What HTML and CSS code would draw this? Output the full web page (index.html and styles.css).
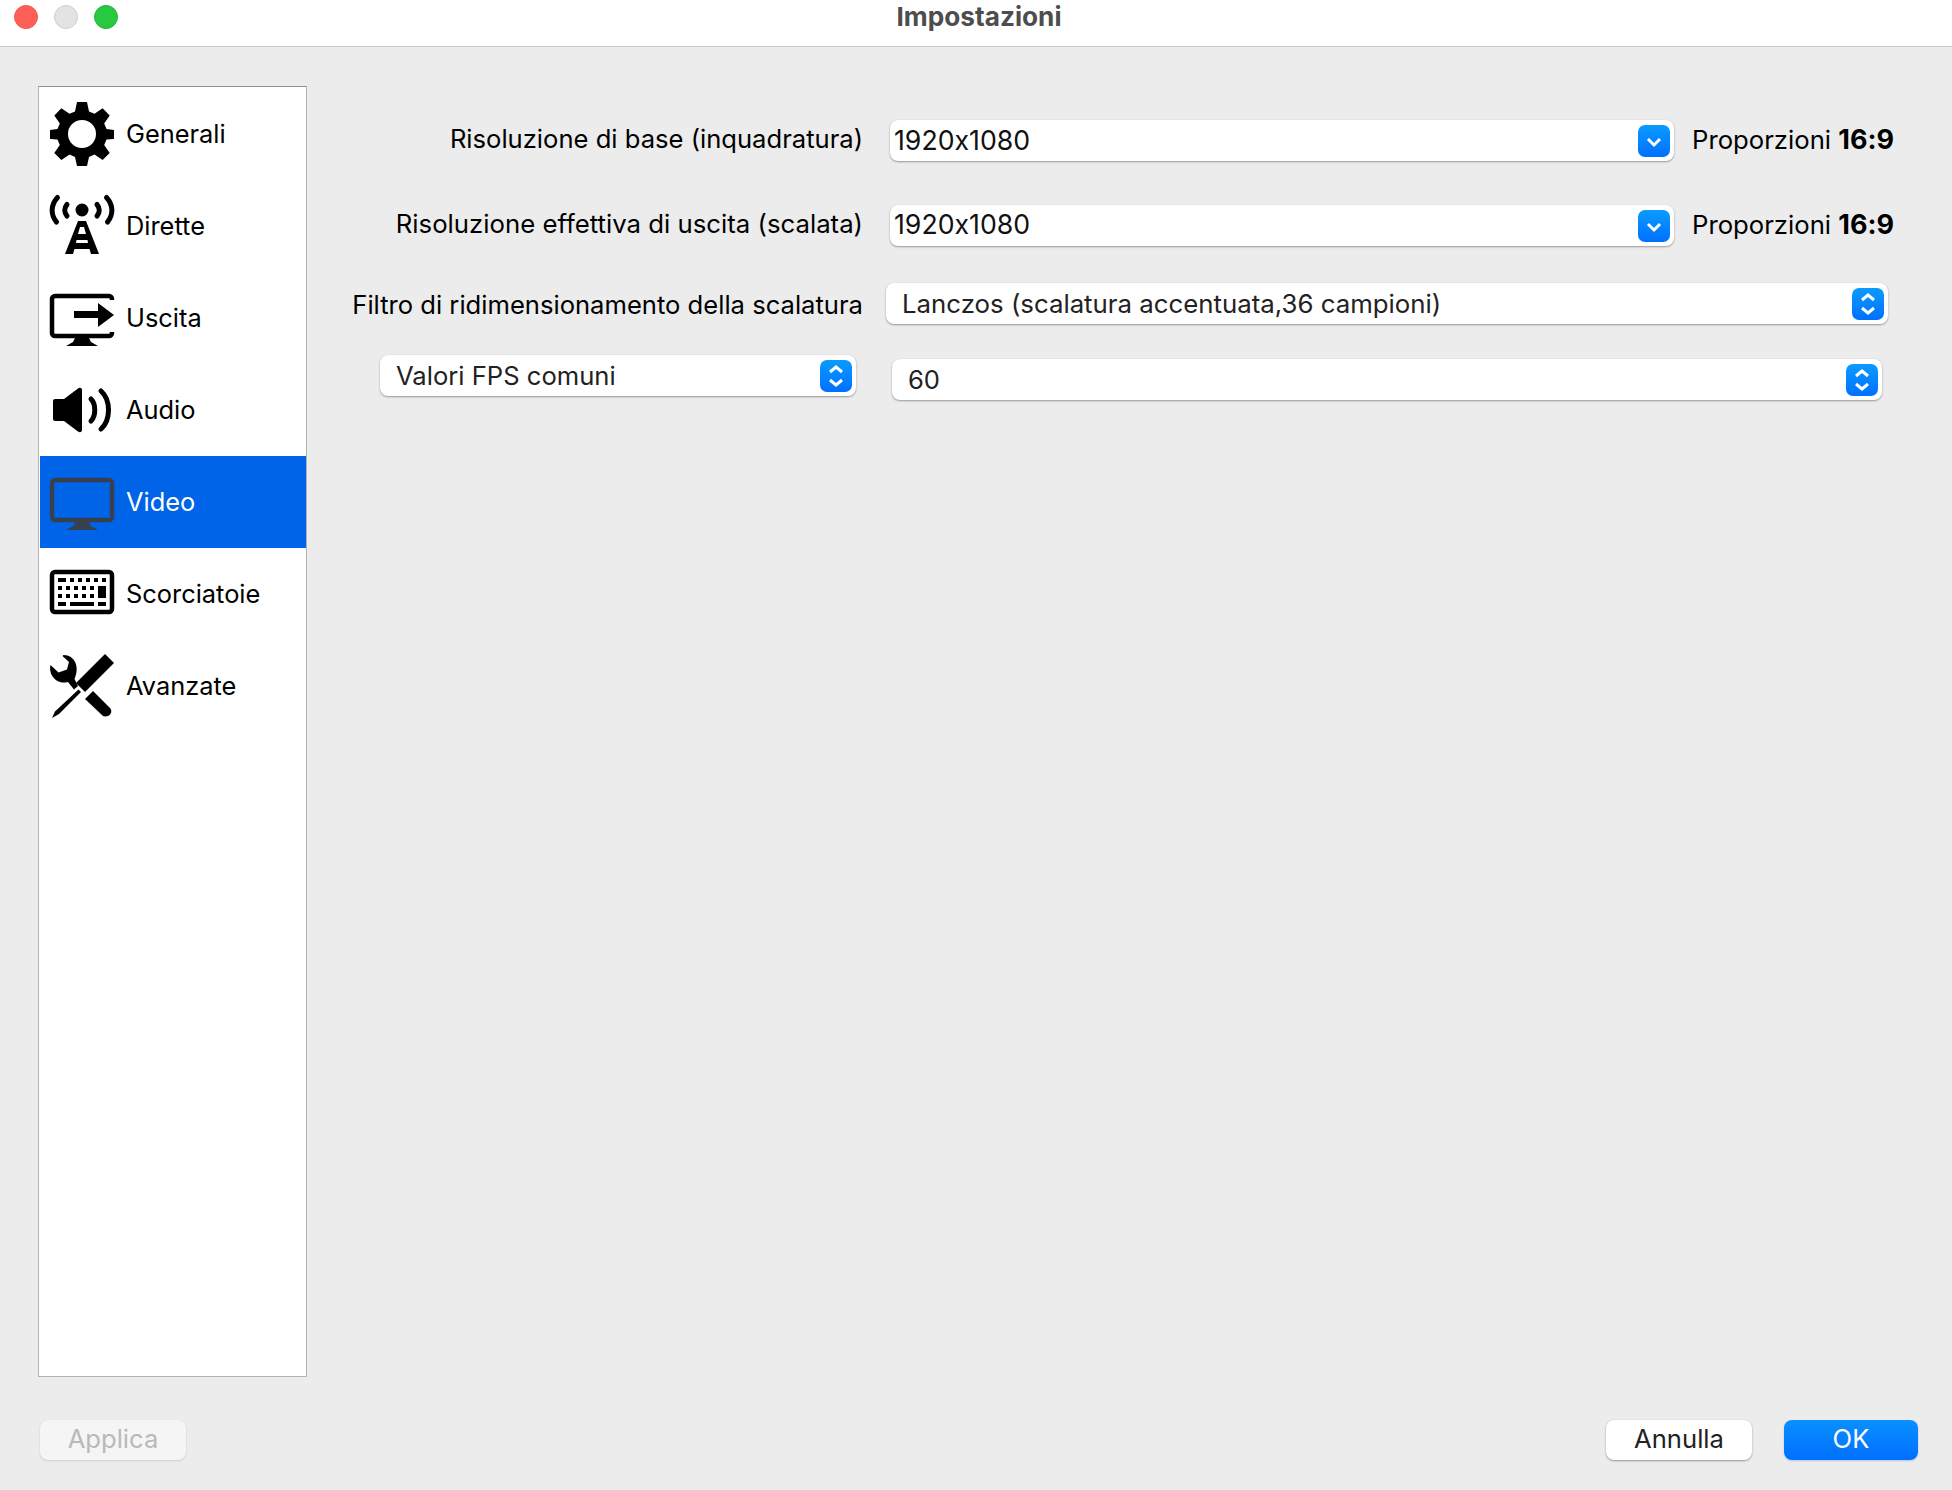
FILE: index.html
```html
<!DOCTYPE html>
<html lang="it">
<head>
<meta charset="utf-8">
<title>Impostazioni</title>
<link rel="stylesheet" href="styles.css">
</head>
<body>
<div class="window">
  <header class="titlebar">
    <div class="lights">
      <span class="light light-red"></span>
      <span class="light light-grey"></span>
      <span class="light light-green"></span>
    </div>
    <div class="title">Impostazioni</div>
    <div></div>
  </header>
  <main class="content">
    <nav class="sidebar">
      <div class="nav-item">
        <svg class="nav-icon" viewBox="0 0 64 64">
          <path fill-rule="evenodd" d="M27 0H37L39 9.500 44.500 11.800 52.600 6.300 59.700 13.400 54.200 21.500 56.500 27 64 28V37L56.500 37.500 54.200 43 59.700 51 52.600 58.100 44.500 52.600 39 55 37 64H27L25 55 19.500 52.600 11.400 58.100 4.300 51 9.800 43 7.500 37.500 0 37V28L7.500 27 9.800 21.500 4.300 13.400 11.400 6.300 19.500 11.800 25 9.500ZM32 18A14 14 0 1 0 32 46 14 14 0 1 0 32 18Z"/>
        </svg>
        <span class="nav-label">Generali</span>
      </div>
      <div class="nav-item">
        <svg class="nav-icon" viewBox="0 0 64 64">
          <circle cx="32" cy="16" r="6.500"/>
          <path class="stroke round" d="M7.500 3.500C0.500 11 0.500 21 6.500 28M56.500 3.500C63.500 11 63.500 21 57.500 28"/>
          <path class="stroke round" d="M17 10.500C14 14 14 18.500 17 22M47 10.500C50 14 50 18.500 47 22"/>
          <path d="M28 27H36L49 60H41L39.500 55H24.500L23 60H15ZM30 33 28 40H36L34 33ZM26.500 46 26 49H38L37.500 46Z" fill-rule="evenodd"/>
        </svg>
        <span class="nav-label">Dirette</span>
      </div>
      <div class="nav-item">
        <svg class="nav-icon" viewBox="0 0 64 64">
          <path class="stroke" d="M62 14V13A3 3 0 0 0 59 10H5A3 3 0 0 0 2 13V47A3 3 0 0 0 5 50H59A3 3 0 0 0 62 47V46"/>
          <path d="M24 25H48V17L64 29 48 41V32H24Z"/>
          <path d="M25 52H39L41 56 48 60H16L23 56Z"/>
        </svg>
        <span class="nav-label">Uscita</span>
      </div>
      <div class="nav-item">
        <svg class="nav-icon" viewBox="0 0 64 64">
          <path d="M3 23A2 2 0 0 1 5 21H14L28 10.500C30 9 32 10 32 12V52C32 54 30 55 28 53.500L14 43H5A2 2 0 0 1 3 41Z"/>
          <path class="stroke round" d="M41 21C46 26 46 38 41 43"/>
          <path class="stroke round" d="M51 13C61 22 61 42 51 51"/>
        </svg>
        <span class="nav-label">Audio</span>
      </div>
      <div class="nav-item nav-item-active">
        <svg class="nav-icon" viewBox="0 0 64 64">
          <rect class="stroke screen" x="2" y="10" width="60" height="40" rx="3"/>
          <path class="screen-fill" d="M25 52H39L41 56 48 60H16L23 56Z"/>
        </svg>
        <span class="nav-label">Video</span>
      </div>
      <div class="nav-item">
        <svg class="nav-icon" viewBox="0 0 64 64">
          <rect class="stroke" x="2" y="10" width="60" height="40" rx="3"/>
          <path d="M8 16h8v4H8zM20 16h4v4h-4zM28 16h4v4h-4zM36 16h4v4h-4zM44 16h4v4h-4zM52 16h4v4h-4zM8 24h4v4H8zM16 24h4v4h-4zM24 24h4v4h-4zM32 24h4v4h-4zM40 24h4v4h-4zM48 24h8v12h-8zM8 32h4v4H8zM16 32h4v4h-4zM24 32h4v4h-4zM32 32h4v4h-4zM40 32h4v4h-4zM8 40h8v4H8zM20 40h24v4H20zM48 40h8v4h-8z"/>
        </svg>
        <span class="nav-label">Scorciatoie</span>
      </div>
      <div class="nav-item">
        <svg class="nav-icon" viewBox="0 0 64 64">
          <path d="M0.500 11C-2 22 8 31 18 28L24 35.500 28 32 24.500 25C30 13 25 1 13.500 1L12.500 2 19 8 17 15.500 8.500 18.500Z"/>
          <path d="M55 0 64 9 35 38 26 29Z"/>
          <path d="M28.500 35.500 31 38 9 60 2 64 5 57.500Z"/>
          <path d="M35 45 43 37 60 54C64 59 58 64 53 62Z"/>
        </svg>
        <span class="nav-label">Avanzate</span>
      </div>
    </nav>
    <section class="form">
      <div class="row row-base">
        <label class="field-label">Risoluzione di base (inquadratura)</label>
        <div class="combo combo-editable">
          <span class="combo-text">1920x1080</span>
          <span class="combo-btn"><svg viewBox="0 0 32 32"><path class="chev" d="M10 14l6 6 6-6"/></svg></span>
        </div>
        <span class="ratio">Proporzioni <b>16:9</b></span>
      </div>
      <div class="row row-output">
        <label class="field-label">Risoluzione effettiva di uscita (scalata)</label>
        <div class="combo combo-editable">
          <span class="combo-text">1920x1080</span>
          <span class="combo-btn"><svg viewBox="0 0 32 32"><path class="chev" d="M10 14l6 6 6-6"/></svg></span>
        </div>
        <span class="ratio">Proporzioni <b>16:9</b></span>
      </div>
      <div class="row row-filter">
        <label class="field-label">Filtro di ridimensionamento della scalatura</label>
        <div class="combo combo-filter">
          <span class="combo-text">Lanczos (scalatura accentuata,36 campioni)</span>
          <span class="combo-btn"><svg viewBox="0 0 32 32"><path class="chev" d="M10 12l6-5 6 5M10 20l6 5 6-5"/></svg></span>
        </div>
      </div>
      <div class="row row-fps">
        <div class="combo combo-fps-type">
          <span class="combo-text">Valori FPS comuni</span>
          <span class="combo-btn"><svg viewBox="0 0 32 32"><path class="chev" d="M10 12l6-5 6 5M10 20l6 5 6-5"/></svg></span>
        </div>
        <div class="combo combo-fps">
          <span class="combo-text">60</span>
          <span class="combo-btn"><svg viewBox="0 0 32 32"><path class="chev" d="M10 12l6-5 6 5M10 20l6 5 6-5"/></svg></span>
        </div>
      </div>
    </section>
  </main>
  <footer class="footer">
    <button class="btn btn-disabled" type="button">Applica</button>
    <div class="footer-right">
      <button class="btn" type="button">Annulla</button>
      <button class="btn btn-primary" type="button">OK</button>
    </div>
  </footer>
</div>
</body>
</html>
```

FILE: styles.css
```css
* { box-sizing: border-box; }

html, body { margin: 0; padding: 0; }

body {
  width: 1952px;
  height: 1490px;
  overflow: hidden;
  background: #ececec;
  font-family: Inter, "Liberation Sans", sans-serif;
  font-size: 25.600px;
  font-feature-settings: "calt" 0;
  color: #000;
}

.window {
  display: flex;
  flex-direction: column;
  height: 1490px;
}

.titlebar {
  flex: none;
  display: grid;
  grid-template-columns: 1fr auto 1fr;
  height: 47px;
  padding: 5px 0 0 14px;
  background: #fff;
  border-bottom: 1px solid #c9c9c9;
}

.lights { display: flex; gap: 16px; }

.light {
  width: 24px;
  height: 24px;
  border-radius: 50%;
}
.light-red { background: #ff5f57; border: 1px solid #ee5850; }
.light-grey { background: #e3e3e3; border: 1px solid #cfcfcf; }
.light-green { background: #28c840; border: 1px solid #22b737; }

.title {
  margin-top: -3px;
  line-height: 30px;
  font-size: 26.200px;
  font-weight: 700;
  color: #4d4d4d;
  transform: translateX(-4px);
}

.content {
  display: flex;
  flex: none;
  height: 1330px;
  padding: 39px 0 0 38px;
}

.sidebar {
  flex: none;
  width: 269px;
  height: 1291px;
  padding: 1px 0 0 1px;
  background: #fff;
  border: 1px solid #b4b4b4;
  border-top-color: #8f8f8f;
  font-size: 25.400px;
}

.nav-item {
  display: flex;
  align-items: center;
  gap: 12px;
  height: 92px;
  padding-left: 10px;
}

.nav-label { padding-bottom: 2px; }

.nav-icon {
  flex: none;
  width: 64px;
  height: 64px;
  overflow: visible;
}

.nav-item-active {
  background: #0064e8;
  color: #fff;
}

.stroke { fill: none; stroke: #000; stroke-width: 4.500; }
.stroke.round { stroke-width: 5; stroke-linecap: round; }
.stroke.screen { stroke: #36404f; }
.screen-fill { fill: #36404f; }

.form {
  flex: 1;
  min-width: 0;
  padding-top: 34px;
}

.row { display: flex; align-items: center; }
.row-output { margin-top: 44px; }
.row-filter { margin-top: 37px; }
.row-fps { margin-top: 31px; align-items: flex-start; }

.field-label {
  flex: none;
  width: 556px;
  text-align: right;
  white-space: nowrap;
}

.row-base .field-label { padding-bottom: 4px; }
.row-output .field-label { padding-bottom: 5px; font-size: 25.750px; }
.row-filter .field-label { padding-top: 2px; }

.combo {
  display: flex;
  align-items: center;
  justify-content: space-between;
  height: 41px;
  padding-right: 4px;
  background: #fff;
  border-radius: 8px;
  box-shadow: 0 1px 2px rgba(0, 0, 0, 0.35), 0 0 1px rgba(0, 0, 0, 0.12);
  color: #222;
  white-space: nowrap;
}

.combo-editable {
  width: 784px;
  margin-left: 27px;
  padding-left: 4px;
  color: #111;
}

.combo-editable .combo-text {
  padding-bottom: 2px;
  font-size: 26.700px;
}

.row-output .combo-text { padding-bottom: 3px; }

.combo-filter {
  width: 1002px;
  margin-left: 23px;
  padding-left: 16px;
}

.combo-filter .combo-text { font-size: 25.800px; }

.combo-fps-type {
  width: 476px;
  margin-left: 73px;
  padding-left: 16px;
}

.combo-fps {
  width: 990px;
  margin: 4px 0 0 36px;
  padding-left: 16px;
}

.combo-btn {
  flex: none;
  width: 32px;
  height: 32px;
  border-radius: 7px;
  background: linear-gradient(#0a9bff, #0070ff);
}

.combo-btn svg { display: block; width: 32px; height: 32px; }

.chev {
  fill: none;
  stroke: #fff;
  stroke-width: 3;
}

.ratio {
  margin-left: 18px;
  padding-bottom: 2px;
  font-size: 25.700px;
  white-space: nowrap;
}

.ratio b { font-size: 27px; font-weight: 700; }

.footer {
  flex: none;
  display: flex;
  justify-content: space-between;
  align-items: flex-start;
  height: 113px;
  padding: 43px 34px 0 40px;
}

.footer-right { display: flex; gap: 32px; }

.btn {
  width: 146px;
  height: 40px;
  padding: 0 0 4px;
  border: 0;
  border-radius: 8px;
  background: #fff;
  box-shadow: 0 1px 2px rgba(0, 0, 0, 0.35), 0 0 1px rgba(0, 0, 0, 0.12);
  font: inherit;
  color: #222;
}

.btn-disabled {
  background: #f5f5f5;
  color: #b9b9b9;
  box-shadow: 0 1px 2px rgba(0, 0, 0, 0.12), 0 0 1px rgba(0, 0, 0, 0.08);
}

.btn-primary {
  width: 134px;
  background: linear-gradient(#0a90ff, #006fff);
  color: #fff;
  box-shadow: 0 1px 2px rgba(0, 90, 255, 0.25);
}
```
